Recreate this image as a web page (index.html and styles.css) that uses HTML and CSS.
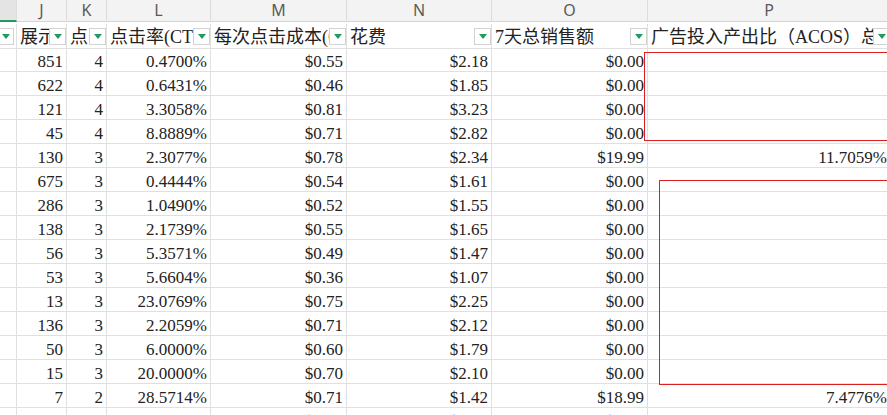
FILE: index.html
```html
<!DOCTYPE html>
<html lang="zh-CN">
<head>
<meta charset="utf-8">
<title>Sheet</title>
<link rel="stylesheet" href="styles.css">
</head>
<body>
<div class="sheet">
  <div class="colhead sel"></div>
  <div class="colhead">J</div>
  <div class="colhead">K</div>
  <div class="colhead">L</div>
  <div class="colhead">M</div>
  <div class="colhead">N</div>
  <div class="colhead">O</div>
  <div class="colhead">P</div>

  <div class="hd hd-i"><span class="flt"></span></div>
  <div class="hd"><span class="ht">展示次数</span><span class="flt"></span></div>
  <div class="hd"><span class="ht">点击量</span><span class="flt"></span></div>
  <div class="hd"><span class="ht">点击率(CTR)</span><span class="flt"></span></div>
  <div class="hd"><span class="ht">每次点击成本(CPC)</span><span class="flt"></span></div>
  <div class="hd"><span class="ht">花费</span><span class="flt"></span></div>
  <div class="hd"><span class="ht">7天总销售额</span><span class="flt"></span></div>
  <div class="hd"><span class="ht">广告投入产出比（ACOS）总计</span><span class="flt"></span></div>

  <div class="c"></div><div class="c">851</div><div class="c">4</div><div class="c">0.4700%</div><div class="c">$0.55</div><div class="c">$2.18</div><div class="c">$0.00</div><div class="c"></div>
  <div class="c"></div><div class="c">622</div><div class="c">4</div><div class="c">0.6431%</div><div class="c">$0.46</div><div class="c">$1.85</div><div class="c">$0.00</div><div class="c"></div>
  <div class="c"></div><div class="c">121</div><div class="c">4</div><div class="c">3.3058%</div><div class="c">$0.81</div><div class="c">$3.23</div><div class="c">$0.00</div><div class="c"></div>
  <div class="c"></div><div class="c">45</div><div class="c">4</div><div class="c">8.8889%</div><div class="c">$0.71</div><div class="c">$2.82</div><div class="c">$0.00</div><div class="c"></div>
  <div class="c"></div><div class="c">130</div><div class="c">3</div><div class="c">2.3077%</div><div class="c">$0.78</div><div class="c">$2.34</div><div class="c">$19.99</div><div class="c">11.7059%</div>
  <div class="c"></div><div class="c">675</div><div class="c">3</div><div class="c">0.4444%</div><div class="c">$0.54</div><div class="c">$1.61</div><div class="c">$0.00</div><div class="c"></div>
  <div class="c"></div><div class="c">286</div><div class="c">3</div><div class="c">1.0490%</div><div class="c">$0.52</div><div class="c">$1.55</div><div class="c">$0.00</div><div class="c"></div>
  <div class="c"></div><div class="c">138</div><div class="c">3</div><div class="c">2.1739%</div><div class="c">$0.55</div><div class="c">$1.65</div><div class="c">$0.00</div><div class="c"></div>
  <div class="c"></div><div class="c">56</div><div class="c">3</div><div class="c">5.3571%</div><div class="c">$0.49</div><div class="c">$1.47</div><div class="c">$0.00</div><div class="c"></div>
  <div class="c"></div><div class="c">53</div><div class="c">3</div><div class="c">5.6604%</div><div class="c">$0.36</div><div class="c">$1.07</div><div class="c">$0.00</div><div class="c"></div>
  <div class="c"></div><div class="c">13</div><div class="c">3</div><div class="c">23.0769%</div><div class="c">$0.75</div><div class="c">$2.25</div><div class="c">$0.00</div><div class="c"></div>
  <div class="c"></div><div class="c">136</div><div class="c">3</div><div class="c">2.2059%</div><div class="c">$0.71</div><div class="c">$2.12</div><div class="c">$0.00</div><div class="c"></div>
  <div class="c"></div><div class="c">50</div><div class="c">3</div><div class="c">6.0000%</div><div class="c">$0.60</div><div class="c">$1.79</div><div class="c">$0.00</div><div class="c"></div>
  <div class="c"></div><div class="c">15</div><div class="c">3</div><div class="c">20.0000%</div><div class="c">$0.70</div><div class="c">$2.10</div><div class="c">$0.00</div><div class="c"></div>
  <div class="c"></div><div class="c">7</div><div class="c">2</div><div class="c">28.5714%</div><div class="c">$0.71</div><div class="c">$1.42</div><div class="c">$18.99</div><div class="c">7.4776%</div>
  <div class="c"></div><div class="c">1537</div><div class="c">2</div><div class="c">0.1301%</div><div class="c">$0.51</div><div class="c">$1.02</div><div class="c">$0.00</div><div class="c"></div>

  <div class="mark mark-a"></div>
  <div class="mark mark-b"></div>
</div>
</body>
</html>
```

FILE: styles.css
```css
html, body {
  margin: 0;
  padding: 0;
  background: #ffffff;
  overflow: hidden;
}

.sheet {
  position: relative;
  display: grid;
  grid-template-columns: 17px 50px 40px 104px 136px 145px 156px 243px;
  grid-auto-rows: 24px;
  width: 891px;
}

.colhead {
  height: 22px;
  box-sizing: border-box;
  background: #f3f3f3;
  border-right: 1px solid #dcdcdc;
  border-bottom: 1px solid #d4d4d4;
  color: #5a5a5a;
  font: 16px/21px "Noto Sans", "Liberation Sans", sans-serif;
  text-align: center;
}

.colhead.sel {
  background: #e4e4e4;
  border-bottom: 2px solid #1f9a60;
}

.hd {
  height: 25px;
  box-sizing: border-box;
  display: flex;
  align-items: center;
  padding-left: 3px;
  padding-top: 1px;
  border-right: 1px solid #e0e0e0;
  border-bottom: 1px solid #e0e0e0;
  overflow: hidden;
  background: #ffffff;
}

.hd-i {
  justify-content: flex-end;
  padding-left: 0;
  padding-right: 2px;
}

.ht {
  flex: 1 1 auto;
  min-width: 0;
  overflow: hidden;
  white-space: nowrap;
  color: #222222;
  font: 18px/22px "Liberation Serif", "Noto Sans CJK SC", serif;
}

.flt {
  flex: 0 0 auto;
  width: 17px;
  height: 17px;
  box-sizing: border-box;
  border: 1px solid #d2d2d2;
  background: #ffffff;
  display: flex;
  align-items: center;
  justify-content: center;
  margin-bottom: 1px;
}

.flt::before {
  content: "";
  width: 0;
  height: 0;
  border-left: 4px solid transparent;
  border-right: 4px solid transparent;
  border-top: 5px solid #1f9a60;
}

.c {
  height: 24px;
  box-sizing: border-box;
  padding: 4px 3px 0 0;
  border-right: 1px solid #e0e0e0;
  border-bottom: 1px solid #e0e0e0;
  color: #222222;
  font: 17px/20px "Liberation Serif", "Noto Sans CJK SC", serif;
  text-align: right;
  white-space: nowrap;
  overflow: hidden;
}

.mark {
  position: absolute;
  z-index: 2;
  border: 1px solid #dc2020;
  box-sizing: border-box;
  pointer-events: none;
}

.mark-a {
  left: 644px;
  top: 52px;
  width: 260px;
  height: 89px;
}

.mark-b {
  left: 659px;
  top: 180px;
  width: 260px;
  height: 205px;
}
```
